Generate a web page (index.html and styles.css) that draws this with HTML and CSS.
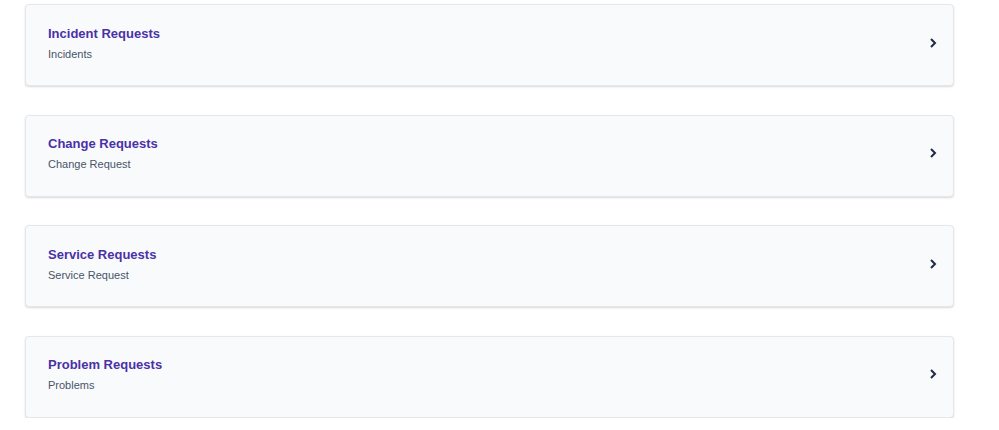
FILE: index.html
```html
<!DOCTYPE html>
<html lang="en">
<head>
  <meta charset="UTF-8">
  <meta name="viewport" content="width=device-width, initial-scale=1.0">
  <title>Requests</title>
  <link rel="stylesheet" href="styles.css">
</head>
<body>

  <div class="request-list">
    <a class="request-card" href="#">
      <div class="request-text">
        <h3>Incident Requests</h3>
        <p>Incidents</p>
      </div>
      <svg class="chevron" viewBox="0 0 10 12" width="10" height="12"><path d="M3 2l4 4-4 4" /></svg>
    </a>

    <a class="request-card" href="#">
      <div class="request-text">
        <h3>Change Requests</h3>
        <p>Change Request</p>
      </div>
      <svg class="chevron" viewBox="0 0 10 12" width="10" height="12"><path d="M3 2l4 4-4 4" /></svg>
    </a>

    <a class="request-card" href="#">
      <div class="request-text">
        <h3>Service Requests</h3>
        <p>Service Request</p>
      </div>
      <svg class="chevron" viewBox="0 0 10 12" width="10" height="12"><path d="M3 2l4 4-4 4" /></svg>
    </a>

    <a class="request-card" href="#">
      <div class="request-text">
        <h3>Problem Requests</h3>
        <p>Problems</p>
      </div>
      <svg class="chevron" viewBox="0 0 10 12" width="10" height="12"><path d="M3 2l4 4-4 4" /></svg>
    </a>
  </div>

</body>
</html>
```

FILE: styles.css
```css
body {
  margin: 0;
  font-family: 'Liberation Sans', Arial, sans-serif;
  background-color: #fff;
  color: #333;
}
.request-list {
  display: flex;
  flex-direction: column;
  gap: 28.67px;
  width: 929px;
  padding: 4px 0 0 25px;
}
.request-card {
  display: flex;
  align-items: center;
  justify-content: space-between;
  height: 80px;
  padding: 0 15px 0 22px;
  background-color: #f9fafb;
  border: 1px solid #e5e7eb;
  border-radius: 4px;
  box-shadow: 0 1px 2px rgba(0, 0, 0, 0.15);
  text-decoration: none;
}
.request-text {
  padding-bottom: 5px;
}
.request-text h3 {
  margin: 0 0 7px;
  font-size: 13px;
  font-weight: bold;
  color: #4a31a8;
}
.request-text p {
  margin: 0;
  font-size: 11px;
  color: #475569;
}
.chevron {
  margin-bottom: 5px;
}
.chevron path {
  fill: none;
  stroke: #1f2a44;
  stroke-width: 2;
}
```
